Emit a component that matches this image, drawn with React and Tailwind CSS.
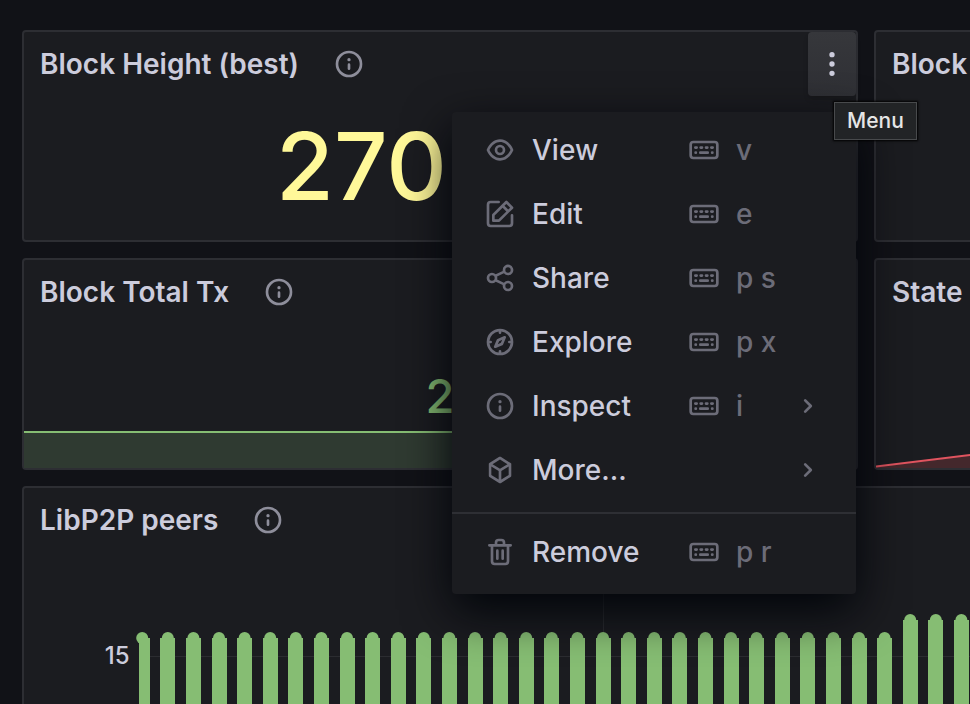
import React from "react";

const ICONS = {
  eye: "M21.92,11.6C19.9,6.91,16.1,4,12,4S4.1,6.91,2.08,11.6a1,1,0,0,0,0,.8C4.1,17.09,7.9,20,12,20s7.9-2.91,9.92-7.6A1,1,0,0,0,21.92,11.6ZM12,18c-3.17,0-6.17-2.29-7.9-6C5.83,8.29,8.83,6,12,6s6.17,2.29,7.9,6C18.17,15.71,15.17,18,12,18ZM12,8a4,4,0,1,0,4,4A4,4,0,0,0,12,8Zm0,6a2,2,0,1,1,2-2A2,2,0,0,1,12,14Z",
  edit: "M21,12a1,1,0,0,0-1,1v6a1,1,0,0,1-1,1H5a1,1,0,0,1-1-1V5A1,1,0,0,1,5,4h6a1,1,0,0,0,0-2H5A3,3,0,0,0,2,5V19a3,3,0,0,0,3,3H19a3,3,0,0,0,3-3V13A1,1,0,0,0,21,12ZM6,12.76V17a1,1,0,0,0,1,1h4.24a1,1,0,0,0,.71-.29l6.92-6.93h0L21.71,8a1,1,0,0,0,0-1.42L17.47,2.29a1,1,0,0,0-1.42,0L13.23,5.12h0L6.29,12.05A1,1,0,0,0,6,12.76ZM16.76,4.41l2.83,2.83L18.17,8.66,15.34,5.83ZM8,13.17l5.93-5.93,2.83,2.83L10.83,16H8Z",
  share: "M18,14a4,4,0,0,0-3.08,1.48l-5.1-2.35a3.64,3.64,0,0,0,0-2.26l5.1-2.35A4,4,0,1,0,14,6a4.17,4.17,0,0,0,.07.71L8.79,9.14a4,4,0,1,0,0,5.72l5.28,2.43A4.17,4.17,0,0,0,14,18a4,4,0,1,0,4-4ZM18,4a2,2,0,1,1-2,2A2,2,0,0,1,18,4ZM6,14a2,2,0,1,1,2-2A2,2,0,0,1,6,14Zm12,6a2,2,0,1,1,2-2A2,2,0,0,1,18,20Z",
  compass: "M12,2A10,10,0,1,0,22,12,10,10,0,0,0,12,2Zm1,17.93V19a1,1,0,0,0-2,0v.93A8,8,0,0,1,4.07,13H5a1,1,0,0,0,0-2H4.07A8,8,0,0,1,11,4.07V5a1,1,0,0,0,2,0V4.07A8,8,0,0,1,19.93,11H19a1,1,0,0,0,0,2h.93A8,8,0,0,1,13,19.93ZM15.14,7.55l-5,2.12a1,1,0,0,0-.52.52l-2.12,5a1,1,0,0,0,.21,1.1,1,1,0,0,0,.7.29.93.93,0,0,0,.4-.08l5-2.12a1,1,0,0,0,.52-.52l2.12-5a1,1,0,0,0-1.31-1.31Zm-2.49,5.1-2.28,1,1-2.28,2.28-1Z",
  info: "M12,2A10,10,0,1,0,22,12,10,10,0,0,0,12,2Zm0,18a8,8,0,1,1,8-8A8,8,0,0,1,12,20Zm0-8.5a1,1,0,0,0-1,1v3a1,1,0,0,0,2,0v-3A1,1,0,0,0,12,11.5Zm0-4a1.25,1.25,0,1,0,1.25,1.25A1.25,1.25,0,0,0,12,7.5Z",
  cube: "M20.47,7.37s0,0,0-.08l-.06-.15a.71.71,0,0,0-.07-.09.94.94,0,0,0-.09-.12l-.09-.07L20,6.78l-7.5-4.63a1,1,0,0,0-1.06,0L4,6.78l-.09.08-.09.07a.94.94,0,0,0-.09.12.71.71,0,0,0-.07.09l-.06.15s0,0,0,.08a1.15,1.15,0,0,0,0,.26v8.74a1,1,0,0,0,.47.85l7.5,4.63h0a.47.47,0,0,0,.15.06s.05,0,.08,0a.86.86,0,0,0,.52,0s.05,0,.08,0a.47.47,0,0,0,.15-.06h0L20,17.22a1,1,0,0,0,.47-.85V7.63A1.15,1.15,0,0,0,20.47,7.37ZM11,19.21l-5.5-3.4V9.43L11,12.82Zm1-8.12L6.4,7.63,12,4.18l5.6,3.45Zm6.5,4.72L13,19.21V12.82l5.5-3.39Z",
  trash: "M10,18a1,1,0,0,0,1-1V11a1,1,0,0,0-2,0v6A1,1,0,0,0,10,18ZM20,6H16V5a3,3,0,0,0-3-3H11A3,3,0,0,0,8,5V6H4A1,1,0,0,0,4,8H5V19a3,3,0,0,0,3,3h8a3,3,0,0,0,3-3V8h1a1,1,0,0,0,0-2ZM10,5a1,1,0,0,1,1-1h2a1,1,0,0,1,1,1V6H10Zm7,14a1,1,0,0,1-1,1H8a1,1,0,0,1-1-1V8H17Zm-3-1a1,1,0,0,0,1-1V11a1,1,0,0,0-2,0v6A1,1,0,0,0,14,18Z",
  angleRight: "M14.83,11.29,10.59,7.05a1,1,0,0,0-1.42,0,1,1,0,0,0,0,1.41L12.71,12,9.17,15.54a1,1,0,0,0,0,1.41,1,1,0,0,0,.71.29,1,1,0,0,0,.71-.29l4.24-4.24A1,1,0,0,0,14.83,11.29Z",
  ellipsis: "M12,7a2,2,0,1,0-2-2A2,2,0,0,0,12,7Zm0,10a2,2,0,1,0,2,2A2,2,0,0,0,12,17Zm0-7a2,2,0,1,0,2,2A2,2,0,0,0,12,10Z",
};

function Icon({ name }) {
  return (
    <svg viewBox="0 0 24 24" className="size-8 shrink-0 fill-current" aria-hidden="true">
      <path d={ICONS[name]} />
    </svg>
  );
}

function KeyboardIcon() {
  return (
    <svg
      viewBox="0 0 24 24"
      className="size-8 shrink-0 fill-none stroke-current stroke-2"
      strokeLinecap="round"
      aria-hidden="true"
    >
      <rect x="2" y="6" width="20" height="12" rx="2" />
      <path d="M5.5 10.2h1M9.5 10.2h1M13.5 10.2h1M17.5 10.2h1M5.7 14h.2M9.2 14h5.6M18.1 14h.2" />
    </svg>
  );
}

const MENU = [
  { icon: "eye", label: "View", keys: "v" },
  { icon: "edit", label: "Edit", keys: "e" },
  { icon: "share", label: "Share", keys: "p s" },
  { icon: "compass", label: "Explore", keys: "p x" },
  { icon: "info", label: "Inspect", keys: "i", submenu: true },
  { icon: "cube", label: "More...", submenu: true },
];

function MenuItem({ icon, label, keys, submenu }) {
  return (
    <button
      type="button"
      role="menuitem"
      className="flex h-16 w-full items-center gap-4 px-8 text-left font-medium text-[#6c6c78]"
    >
      <Icon name={icon} />
      <span className="w-[140px] text-[28px] leading-8 text-[#ccccdc]">{label}</span>
      {keys && (
        <span className="flex items-center gap-4 text-[28px] leading-8">
          <KeyboardIcon />
          {keys}
        </span>
      )}
      {submenu && (
        <span className="ml-auto">
          <Icon name="angleRight" />
        </span>
      )}
    </button>
  );
}

function PanelMenu() {
  return (
    <div
      role="menu"
      className="absolute top-[80px] right-0 z-10 w-[404px] rounded bg-[#1b1c20] pt-[6px] pb-[10px] shadow-[0_16px_48px_rgb(1,4,9)]"
    >
      {MENU.map((item) => (
        <MenuItem key={item.label} {...item} />
      ))}
      <div role="separator" className="mt-[10px] mb-[6px] h-[2px] bg-[#2e2f34]" />
      <MenuItem icon="trash" label="Remove" keys="p r" />
    </div>
  );
}

function Panel({ title, info = true, actions, className = "", children }) {
  return (
    <section
      className={`relative flex min-h-[212px] flex-col rounded border-2 border-[#2d2e33] bg-[#1b1c20] ${className}`}
    >
      <header className="flex h-16 shrink-0 items-center gap-[34px] pl-4">
        <h2 className="text-[28px] leading-8 font-semibold text-[#ccccdc]">{title}</h2>
        {info && (
          <button type="button" aria-label="Description" className="text-[#8e8e9b]">
            <Icon name="info" />
          </button>
        )}
        {actions}
      </header>
      {children}
    </section>
  );
}

function MenuActions() {
  return (
    <div className="relative ml-auto">
      <button
        type="button"
        aria-label="Menu"
        className="flex h-16 w-12 items-center justify-center rounded bg-linear-to-b from-[#36373b] to-[#2f3035] text-[#ccccdc] shadow-md"
      >
        <Icon name="ellipsis" />
      </button>
      <PanelMenu />
      <div
        role="tooltip"
        className="absolute top-[70px] left-[26px] z-20 border border-[#484a4c] bg-[#222426] px-3 py-1 text-[21px] leading-7 font-medium text-[#e6e6e6] shadow-[0_0_2px_1px_rgb(0,0,0)]"
      >
        Menu
      </div>
    </div>
  );
}

const PITCH = 25.6;
const FIRST = 11.7;
const BARS = Array.from({ length: 58 }, (_, i) => (i >= 30 ? 36 : 54));

function PeersChart() {
  return (
    <div className="flex grow pl-[79px]">
      <span className="mt-[90px] h-7 w-7 pr-px text-right text-2xl leading-7 font-medium text-[#ccccdc]">15</span>
      <svg className="h-full w-full grow overflow-hidden" aria-label="LibP2P peers">
        <path d="M8 104.5H1600M472.5 0V400" stroke="#2b2c30" fill="none" />
        {BARS.map((top, i) => {
          const center = FIRST + i * PITCH;
          const x = Math.round(center);
          const left = Math.max(8, x - 8);
          const right = i === 0 ? x + 7 : x + 7;
          return (
            <g key={i} fill="#86bd73">
              <circle cx={center - 0.5} cy={top + 32} r="6" />
              <rect x={left} y={top + 32} width={right - left} height="400" />
            </g>
          );
        })}
      </svg>
    </div>
  );
}

export default function App() {
  return (
    <main className="h-screen overflow-hidden bg-[#111217] pt-[30px] pl-[22px] font-['Inter',sans-serif]">
      <div className="grid w-[calc(200vw-252px)] grid-cols-2 gap-4">
        <Panel title="Block Height (best)" actions={<MenuActions />} className="z-10">
          <p className="pt-[22px] pl-[252px] text-[94px] leading-24 font-medium text-[#fff899]">270</p>
        </Panel>
        <Panel title="Block" info={false} />
        <Panel title="Block Total Tx">
          <p className="pt-[14px] text-center text-[47px] leading-[116px] font-medium text-[#86bd73]">2</p>
          <div className="absolute inset-x-0 bottom-0 h-[37px] border-t-2 border-[#86bd73] bg-[#2f3a31]" />
        </Panel>
        <Panel title="State" info={false}>
          <svg className="mt-auto h-12 w-full" aria-label="State trend">
            <path d="M0 47L94 35.5L200 22V48H0Z" fill="#44282c" />
            <path d="M0 46.5L94 35L200 22" stroke="#e0545f" strokeWidth="2" fill="none" />
          </svg>
        </Panel>
        <Panel title="LibP2P peers" className="col-span-2 h-[500px]">
          <PeersChart />
        </Panel>
      </div>
    </main>
  );
}
